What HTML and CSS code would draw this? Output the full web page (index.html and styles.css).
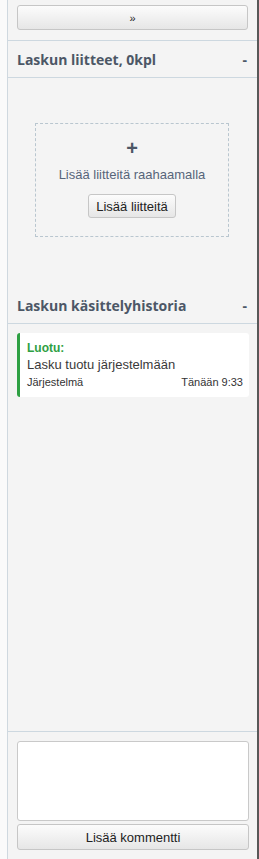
FILE: index.html
```html
<!DOCTYPE html>
<html lang="fi">
<head>
    <meta charset="UTF-8">
    <meta name="viewport" content="width=device-width, initial-scale=1.0">
    <title>Laskun tiedot</title>
    <link rel="stylesheet" href="styles.css">
</head>
<body>
<div class="sidebar">
    <div class="toggle-row">
        <button class="btn btn-wide">&raquo;</button>
    </div>

    <div class="section-header">
        <span>Laskun liitteet, 0kpl</span>
        <span class="collapse">-</span>
    </div>

    <div class="attachments">
        <div class="dropzone">
            <div class="plus">+</div>
            <div class="drop-text">Lisää liitteitä raahaamalla</div>
            <button class="btn btn-small">Lisää liitteitä</button>
        </div>
    </div>

    <div class="section-header">
        <span>Laskun käsittelyhistoria</span>
        <span class="collapse">-</span>
    </div>

    <div class="history">
        <div class="event">
            <div class="event-title">Luotu:</div>
            <div class="event-text">Lasku tuotu järjestelmään</div>
            <div class="event-meta">
                <span>Järjestelmä</span>
                <span class="event-time">Tänään 9:33</span>
            </div>
        </div>
    </div>

    <div class="comment-box">
        <textarea class="comment-input"></textarea>
        <button class="btn btn-wide">Lisää kommentti</button>
    </div>
</div>
</body>
</html>
```

FILE: styles.css
```css
body {
    margin: 0;
    background-color: #fafafa;
    font-family: "Liberation Sans", Arial, sans-serif;
}

.sidebar {
    margin-left: 7px;
    height: 859px;
    box-sizing: border-box;
    border-left: 1px solid #cfd8df;
    border-right: 2px solid #585858;
    background-color: #f4f4f4;
    display: flex;
    flex-direction: column;
}

.btn {
    font-family: "Liberation Sans", Arial, sans-serif;
    font-size: 13px;
    color: #222;
    border: 1px solid #c6c6c6;
    border-radius: 3px;
    background: linear-gradient(#fcfcfc, #e6e6e6);
    cursor: pointer;
}

.btn-wide {
    width: 100%;
    height: 26px;
}

.btn-small {
    height: 24px;
    padding: 0 7px;
}

.toggle-row {
    padding: 5px 9px 10px 9px;
    border-bottom: 1px solid #cdd8e0;
}

.toggle-row .btn {
    height: 25px;
    font-size: 11px;
}

.section-header {
    height: 36px;
    padding: 0 10px 0 9px;
    display: flex;
    justify-content: space-between;
    align-items: center;
    border-bottom: 1px solid #cdd8e0;
    font-family: "Open Sans", sans-serif;
    font-size: 14px;
    font-weight: bold;
    color: #4c5766;
}

.attachments {
    padding: 45px 28px 50px 27px;
}

.dropzone {
    height: 114px;
    box-sizing: border-box;
    border: 1px dashed #b9c6cf;
    display: flex;
    flex-direction: column;
    align-items: center;
    padding-top: 12px;
}

.plus {
    font-size: 20px;
    font-weight: bold;
    color: #4c5766;
    line-height: 24px;
}

.drop-text {
    font-size: 13px;
    color: #57657a;
    margin: 7px 0 12px 0;
}

.history {
    flex: 1;
    padding: 9px 8px 0 9px;
    border-bottom: 1px solid #cdd8e0;
}

.event {
    background-color: #fff;
    border-left: 3px solid #2ea043;
    border-radius: 3px;
    padding: 8px 6px 9px 7px;
}

.event-title {
    font-size: 12px;
    font-weight: bold;
    color: #2ea043;
}

.event-text {
    font-size: 13px;
    color: #3a3a3a;
    margin-top: 2px;
}

.event-meta {
    display: flex;
    justify-content: space-between;
    font-size: 11px;
    color: #333;
    margin-top: 4px;
}

.comment-box {
    padding: 9px 8px 9px 9px;
    display: flex;
    flex-direction: column;
    gap: 3px;
}

.comment-input {
    height: 80px;
    box-sizing: border-box;
    border: 1px solid #c9c9c9;
    border-radius: 3px;
    background-color: #fff;
    resize: none;
    outline: none;
}
```
